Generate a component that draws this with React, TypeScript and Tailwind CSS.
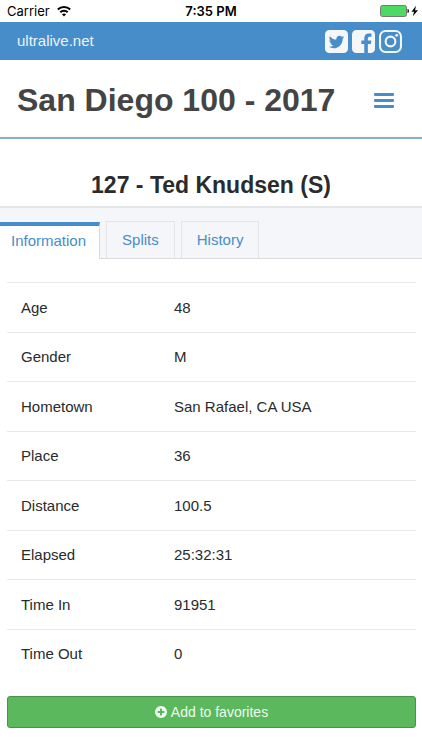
import React from "react";

const facts = [
  ["Age", "48"],
  ["Gender", "M"],
  ["Hometown", "San Rafael, CA USA"],
  ["Place", "36"],
  ["Distance", "100.5"],
  ["Elapsed", "25:32:31"],
  ["Time In", "91951"],
  ["Time Out", "0"],
];

const rounded =
  "M1664 416v960q0 119-84.5 203.5t-203.5 84.5h-960q-119 0-203.5-84.5t-84.5-203.5v-960q0-119 84.5-203.5t203.5-84.5h960q119 0 203.5 84.5t84.5 203.5z";

function StatusBar() {
  return (
    <div className="grid h-[22px] grid-cols-3 items-center px-[7px] font-[Inter,sans-serif] text-[13px] leading-4 text-black">
      <div className="flex items-center gap-[6px]">
        <span>Carrier</span>
        <svg className="h-3 w-4" viewBox="0 0 16 12" fill="none" stroke="#000" strokeWidth="2">
          <path d="M1.8 4.5C5.3 1 10.7 1 14.2 4.5" />
          <path d="M4.3 7.2C6.4 5.1 9.6 5.1 11.7 7.2" />
          <path d="M8 11.5 5.9 9.2C7.1 8.2 8.9 8.2 10.1 9.2Z" fill="#000" stroke="none" />
        </svg>
      </div>
      <span className="text-center font-semibold">7:35 PM</span>
      <svg className="-mr-1 h-3 w-[39px] justify-self-end" viewBox="0 0 39 12">
        <rect x=".5" y=".5" width="26" height="11" rx="2" fill="#4cd964" stroke="#777" />
        <path d="M27.5 4q1.5 0 1.5 2t-1.5 2z" fill="#000" />
        <path d="M36 .8 31.5 6.7h2.6L32.8 11.2 38 5.2h-2.9z" fill="#000" />
      </svg>
    </div>
  );
}

function SocialLinks() {
  return (
    <div className="flex gap-1 text-[#f5f6f8]">
      <a href="#twitter" aria-label="Twitter">
        <svg className="size-[23px]" viewBox="128 128 1536 1536" fill="currentColor" fillRule="evenodd">
          <path d={rounded + "M1408 610q-56 25-121 34 68-40 93-117-65 38-134 51-61-66-153-66-87 0-148.5 61.5t-61.5 148.5q0 29 5 48-129-7-242-65t-192-155q-29 50-29 106 0 114 91 175-47-1-100-26v2q0 75 50 133.5t123 72.5q-29 8-51 8-13 0-39-4 21 63 74.5 104t121.5 42q-116 90-261 90-26 0-50-3 148 94 322 94 112 0 210-35.5t168-95 120.5-137 75-162 24.5-168.5q0-18-1-27 63-45 105-109z"} />
        </svg>
      </a>
      <a href="#facebook" aria-label="Facebook">
        <svg className="size-[23px]" viewBox="128 128 1536 1536" fill="currentColor">
          <path d="M1376 128q119 0 203.5 84.5t84.5 203.5v960q0 119-84.5 203.5t-203.5 84.5h-188v-595h199l30-232h-229v-148q0-56 23.5-84t91.5-28l122-1v-207q-63-9-178-9-136 0-217.5 80t-81.5 226v171h-200v232h200v595h-532q-119 0-203.5-84.5t-84.5-203.5v-960q0-119 84.5-203.5t203.5-84.5h960z" />
        </svg>
      </a>
      <a href="#instagram" aria-label="Instagram">
        <svg className="size-[23px]" viewBox="128 128 1536 1536" fill="none" stroke="currentColor" strokeWidth="138">
          <rect x="197" y="197" width="1398" height="1398" rx="360" />
          <circle cx="896" cy="896" r="325" />
          <circle cx="1306" cy="486" r="92" fill="currentColor" stroke="none" />
        </svg>
      </a>
    </div>
  );
}

export default function App() {
  return (
    <div className="min-h-screen bg-white font-['Liberation_Sans',Arial,sans-serif] text-[15px] leading-5 text-[#292b2c]">
      <StatusBar />
      <div className="flex h-[38px] items-center justify-between bg-[#478dca] pl-[17px] pr-5">
        <a href="#home" className="text-[#eaf4fc]">ultralive.net</a>
        <SocialLinks />
      </div>
      <header className="flex items-center justify-between border-b-2 border-[#87afd0] pl-[17px] pr-7 pt-5 pb-[17px]">
        <h1 className="text-[32px] leading-10 font-bold whitespace-nowrap text-[#444]">San Diego 100 - 2017</h1>
        <button type="button" aria-label="Menu" className="flex w-5 flex-col gap-[3px]">
          <span className="h-[3px] w-full rounded-[1px] bg-[#478dca]" />
          <span className="h-[3px] w-full rounded-[1px] bg-[#478dca]" />
          <span className="h-[3px] w-full rounded-[1px] bg-[#478dca]" />
        </button>
      </header>
      <main>
        <h2 className="pt-8 pb-[7px] text-center text-[23px] leading-7 font-bold">127 - Ted Knudsen (S)</h2>
        <div role="tablist" className="flex h-[53px] items-end gap-[6px] border-t-2 border-b border-t-[#e4e5e7] border-b-[#dadbdd] bg-[#f5f6f9] text-[#478dca]">
          <button type="button" role="tab" aria-selected="true" className="-mb-px h-[37px] border-t-4 border-r border-t-[#478dca] border-r-[#dadbdd] bg-white pr-[13px] pb-1 pl-[11px]">Information</button>
          <button type="button" role="tab" aria-selected="false" className="h-[37px] border border-b-0 border-[#e4e5e7] px-[15px]">Splits</button>
          <button type="button" role="tab" aria-selected="false" className="h-[37px] border border-b-0 border-[#e4e5e7] px-[15px]">History</button>
        </div>
        <div className="pt-[23px] pr-[6px] pl-[7px]">
          <table className="w-full table-fixed border-collapse text-left">
            <tbody>
              {facts.map(([label, value]) => (
                <tr key={label} className="h-[50px] border-t border-[#e8e9ea] even:h-[49px]">
                  <th scope="row" className="w-[154px] pl-[14px] font-normal">{label}</th>
                  <td className="pl-[13px]">{value}</td>
                </tr>
              ))}
            </tbody>
          </table>
          <button type="button" className="mt-[17px] flex h-8 w-full items-center justify-center gap-1 rounded-[3px] border border-[#469447] bg-[#5cb85c] text-sm text-[#eefaee]">
            <svg className="size-3" viewBox="128 128 1536 1536" fill="currentColor" aria-hidden="true">
              <path d="M1344 960v-128q0-26-19-45t-45-19h-256v-256q0-26-19-45t-45-19h-128q-26 0-45 19t-19 45v256h-256q-26 0-45 19t-19 45v128q0 26 19 45t45 19h256v256q0 26 19 45t45 19h128q26 0 45-19t19-45v-256h256q26 0 45-19t19-45zm320-64q0 209-103 385.5t-279.5 279.5-385.5 103-385.5-103-279.5-279.5-103-385.5 103-385.5 279.5-279.5 385.5-103 385.5 103 279.5 279.5 103 385.5z" />
            </svg>
            Add to favorites
          </button>
        </div>
      </main>
    </div>
  );
}
